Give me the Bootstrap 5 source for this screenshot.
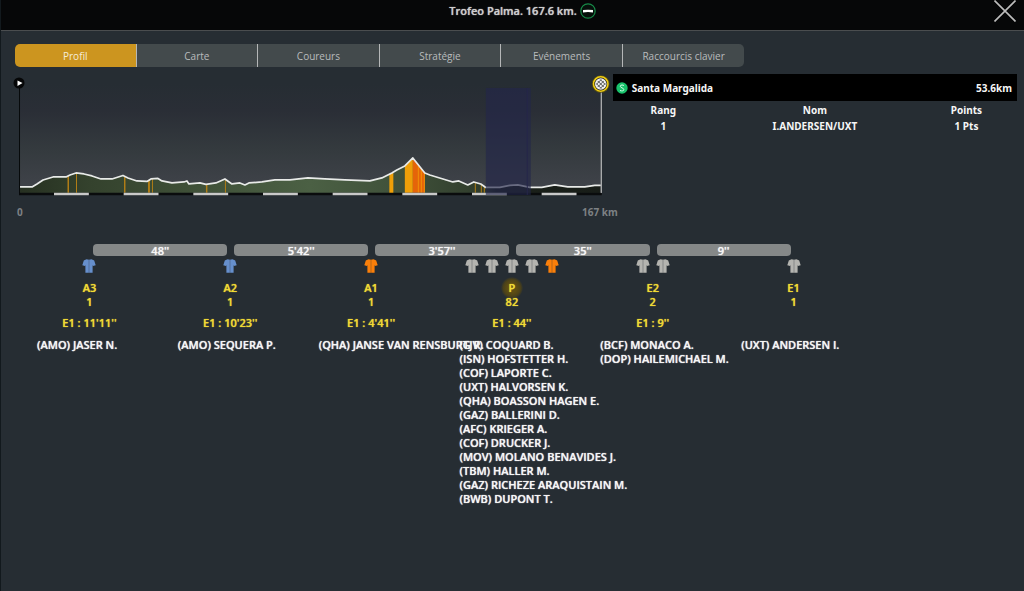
<!DOCTYPE html>
<html lang="fr">
<head>
<meta charset="utf-8">
<meta name="viewport" content="width=device-width, initial-scale=1">
<title>Trofeo Palma</title>
<link href="https://cdn.jsdelivr.net/npm/bootstrap@5.3.0/dist/css/bootstrap.min.css" rel="stylesheet">
<style>
  body { background: #262d33; color: #f6f6f6; font: 700 10px/14px "Noto Sans", "Open Sans", sans-serif; min-height: 100vh; border-left: 1px solid #12191d; }
  .titlebar { height: 31px; background: #060708; border-bottom: 1px solid #4a4d4f; color: #cdcdcd; padding-bottom: 8px; font: 600 11px/14px "Open Sans", sans-serif; }
  .titlebar, .timeline { text-shadow: 0 0 1px currentColor; }
  .title-icon { margin: 0 -20px 0 3px; }
  .close-x { right: 8px; top: 0; line-height: 0; }
  .tabs-row { width: 71.3%; margin: 13px 0 0 14px; }
  .tabs-row .btn { height: 23px; padding: 0; font: 400 10px/24px "Open Sans", sans-serif; color: #b9bcbd; background: #434a4c; border: 0; border-right: 1px solid #b5b7b8; border-radius: 0; }
  .tabs-row .btn:first-child { border-radius: 5px 0 0 5px; }
  .tabs-row .btn:last-child { border-radius: 0 5px 5px 0; border-right: 0; }
  .tabs-row .btn.active { background: #cc951f; color: #f5ecd8; }
  .profile { width: 59.9%; padding: 3px 0 0 11px; }
  .axis { padding: 5px 0 0 5px; margin-right: -4px; color: #7d8184; }
  .sprint { margin: 7px 7px 0 -1px; min-width: 0; }
  .sprint-head { height: 27px; background: #000; padding: 0 5px 0 3px; }
  .points { margin-top: 1px; }
  .points th, .points td { padding: 0; line-height: 16px; text-align: center; font-weight: 700; }
  .timeline { width: 82.6%; margin: 25px 0 0 18px; font: 600 11px/14px "Open Sans", sans-serif; }
  .gaps { display: grid; grid-template-columns: repeat(5, 1fr); margin: 0 8.333%; }
  .gap-bar { height: 12px; line-height: 13px; margin: 0 3px 0 4px; border-radius: 4px; background: #858888; text-align: center; }
  .groups { display: grid; grid-template-columns: repeat(6, minmax(0, 1fr)); }
  .jerseys { gap: 6px; padding-top: 3px; height: 18px; }
  .yl { color: #f0da35; text-align: center; }
  .glow { display: inline-block; width: 22px; height: 22px; line-height: 22px; margin: -4px 0; border-radius: 50%; background: radial-gradient(#5d4d14 30%, #4b4119 55%, #262d33 72%); }
  .gname { margin-top: 7px; }
  .delta { height: 14px; margin: 7px 0 8px; }
  .riders { margin: 0; padding-left: 18px; list-style: none; white-space: nowrap; }
</style>
</head>
<body>
<svg class="d-none" aria-hidden="true"><defs>
  <symbol id="jersey" viewBox="0 0 14 14"><path fill="currentColor" d="M4.500.3Q7 1 9.500.3L12.200 1.600 13.700 6.300 11 7 10.600 6V13.700H3.400V6L3 7 .3 6.300 1.800 1.600Z"/><path d="M7 1V13.700" stroke="#262d33" stroke-opacity=".4" stroke-width=".8"/></symbol>
</defs></svg>
<header class="titlebar position-relative d-flex justify-content-center align-items-center">
  <span>Trofeo Palma. 167.6 km.</span>
  <svg class="title-icon" width="16" height="16" viewBox="0 0 16 16"><circle cx="8" cy="8" r="7.200" fill="#06100b" stroke="#178a48" stroke-width="1.200"/><path d="M3 7Q8 6.500 13 7V9.500Q8 8.500 3 9.500Z" fill="#fff"/></svg>
  <button type="button" class="close-x position-absolute bg-transparent border-0 p-0" aria-label="Fermer"><svg width="22" height="22" viewBox="0 0 22 22"><path d="M.5.5 21.500 21.500M21.500.5.5 21.500" stroke="#bdbdbd" stroke-width="1.600"/></svg></button>
</header>
<nav class="tabs-row d-flex">
  <button type="button" class="btn active col-2">Profil</button>
  <button type="button" class="btn col-2">Carte</button>
  <button type="button" class="btn col-2">Coureurs</button>
  <button type="button" class="btn col-2">Stratégie</button>
  <button type="button" class="btn col-2">Evénements</button>
  <button type="button" class="btn col-2">Raccourcis clavier</button>
</nav>
<main>
  <div class="d-flex align-items-start">
    <section class="profile flex-shrink-0">
      <svg class="d-block w-100" viewBox="12 70 602 130" role="img" aria-label="Profil de l'étape">
        <defs>
          <linearGradient id="sky" x2="0" y2="1"><stop stop-color="#262d33"/><stop offset=".25" stop-color="#2a2e36"/><stop offset=".6" stop-color="#343a3e"/><stop offset="1" stop-color="#41444b"/></linearGradient>
          <linearGradient id="land" x2="1" y2="0"><stop stop-color="#263021"/><stop offset=".12" stop-color="#34422d"/><stop offset=".5" stop-color="#4b6044"/><stop offset=".68" stop-color="#3d4e38"/><stop offset=".8" stop-color="#2f3b2b"/><stop offset=".82" stop-color="#1b211a"/><stop offset="1" stop-color="#181d18"/></linearGradient>
          <path id="ridge" d="M20 187H32L37 184 43 180 53 177 66 177 70 175 76 173 84 174 92 176 101 179 112 179 123 175.500 128 178 137 181 147 181.500 151 179 158 178.500 162 181 172 183 184 182 187 181 189 184 200 183 206 184.500 216 183 225 179 232 184 240 183 245 185 249 183 262 182 275 180 290 180 308 178 325 179 345 180 370 181 382 178 392 173 397 170 405 166 413 158 425 173 430 175 453 182 459 181 468 185 474 182 481 184 486 187.500 500 187.500 510 185.500 518 185 530 187.500 542 187.500 555 185 568 187 585 187 595 185.500 601 185.500"/>
          <clipPath id="under"><path d="M20 187H32L37 184 43 180 53 177 66 177 70 175 76 173 84 174 92 176 101 179 112 179 123 175.500 128 178 137 181 147 181.500 151 179 158 178.500 162 181 172 183 184 182 187 181 189 184 200 183 206 184.500 216 183 225 179 232 184 240 183 245 185 249 183 262 182 275 180 290 180 308 178 325 179 345 180 370 181 382 178 392 173 397 170 405 166 413 158 425 173 430 175 453 182 459 181 468 185 474 182 481 184 486 187.500 500 187.500 510 185.500 518 185 530 187.500 542 187.500 555 185 568 187 585 187 595 185.500 601 185.500V193H20Z"/></clipPath>
        </defs>
        <rect x="20" y="84" width="581" height="109" fill="url(#sky)"/>
        <g clip-path="url(#under)">
          <rect x="20" y="150" width="581" height="43" fill="url(#land)"/>
          <path fill="#b07d16" d="M67.500 150h1.500v43h-1.500zM76 150h1v43h-1zM124 150h1.500v43h-1.500zM148 150h2v43h-2zM152 150h1v43h-1zM206 150h1.500v43h-1.500zM225 150h1v43h-1zM475 150h1v43h-1zM481 150h1v43h-1zM484 150h1v43h-1z"/>
          <path fill="#ee9f08" d="M389.500 150h4v43h-4zM405 150h8v43h-8z"/>
          <path fill="#e56409" d="M413 150h12v43h-12z"/>
          <path stroke="#ef9209" d="M418.500 150v43M421.500 150v43M424.500 150v43"/>
        </g>
        <use href="#ridge" fill="none" stroke="#e8eae8" stroke-width="1.700" stroke-linejoin="round"/>
        <path d="M19 194H602" stroke="#0a0c0d" stroke-width="2.500"/>
        <path d="M54 194H602" stroke="#c9c9c9" stroke-width="2.500" stroke-dasharray="34.850"/>
        <rect x="486" y="88" width="45" height="107" fill="#24264a" fill-opacity=".65"/>
        <path d="M527.500 88V195" stroke="#25264a"/>
        <path d="M19.500 84V195" stroke="#080a0b"/>
        <path d="M601.500 84V193" stroke="#d8d8d8"/>
        <circle cx="19" cy="83" r="5.500" fill="#050607"/><path d="M17.500 80.500 22.500 83 17.500 86Z" fill="#fff"/>
        <circle cx="601" cy="84" r="8.800" fill="#5c5312"/><circle cx="601" cy="84" r="7.200" fill="#20201c" stroke="#f2cf14" stroke-width="1.500"/>
        <circle cx="601" cy="84" r="5.800" fill="#efefef"/>
        <path d="M598 81 604 87M596.500 83.500 601.500 88.500M600.500 79.500 605.500 84.500M604 81 598 87M605.500 83.500 600.500 88.500M601.500 79.500 596.500 84.500" stroke="#444" stroke-width=".9"/>
      </svg>
      <div class="axis d-flex justify-content-between"><span>0</span><span>167 km</span></div>
    </section>
    <section class="sprint flex-fill">
      <div class="sprint-head d-flex align-items-center">
        <svg class="me-1" width="12" height="12" viewBox="0 0 12 12"><circle cx="6" cy="6" r="5.700" fill="#19c26b"/><path d="M8 3.600Q7.200 3 6 3 4.300 3 4.300 4.300C4.300 6 7.800 5.700 7.800 7.600 7.800 9 6 9.200 4 8.500" fill="none" stroke="#d8ffe9"/></svg>
        <span>Santa Margalida</span><span class="ms-auto">53.6km</span>
      </div>
      <table class="points w-100">
        <colgroup><col style="width:25%"><col style="width:50%"><col style="width:25%"></colgroup>
        <thead><tr><th scope="col">Rang</th><th scope="col">Nom</th><th scope="col">Points</th></tr></thead>
        <tbody><tr><td>1</td><td>I.ANDERSEN/UXT</td><td>1 Pts</td></tr></tbody>
      </table>
    </section>
  </div>
  <section class="timeline">
    <div class="gaps"><div class="gap-bar">48''</div><div class="gap-bar">5'42''</div><div class="gap-bar">3'57''</div><div class="gap-bar">35''</div><div class="gap-bar">9''</div></div>
    <div class="groups" id="groups"></div>
  </section>
</main>
<script>
  const blue = '#668fcc', grey = '#b4b4b0', orange = '#fa7f0a';
  const groups = [
    ['A3', 1, "E1 : 11'11''", [blue], ['(AMO) JASER N.']],
    ['A2', 1, "E1 : 10'23''", [blue], ['(AMO) SEQUERA P.']],
    ['A1', 1, "E1 : 4'41''", [orange], ['(QHA) JANSE VAN RENSBURG R.']],
    ['P', 82, "E1 : 44''", [grey, grey, grey, grey, orange], ['(TJV) COQUARD B.', '(ISN) HOFSTETTER H.', '(COF) LAPORTE C.', '(UXT) HALVORSEN K.', '(QHA) BOASSON HAGEN E.', '(GAZ) BALLERINI D.', '(AFC) KRIEGER A.', '(COF) DRUCKER J.', '(MOV) MOLANO BENAVIDES J.', '(TBM) HALLER M.', '(GAZ) RICHEZE ARAQUISTAIN M.', '(BWB) DUPONT T.']],
    ['E2', 2, "E1 : 9''", [grey, grey], ['(BCF) MONACO A.', '(DOP) HAILEMICHAEL M.']],
    ['E1', 1, '', [grey], ['(UXT) ANDERSEN I.']]
  ];
  document.getElementById('groups').innerHTML = groups.map(([name, count, delta, shirts, riders]) => `
    <div>
      <div class="jerseys d-flex justify-content-center">${shirts.map(c => `<svg width="14" height="14" style="color:${c}"><use href="#jersey"/></svg>`).join('')}</div>
      <div class="yl gname"><span class="${name === 'P' ? 'glow' : ''}">${name}</span></div>
      <div class="yl">${count}</div>
      <div class="yl delta">${delta}</div>
      <ul class="riders">${riders.map(r => `<li>${r}</li>`).join('')}</ul>
    </div>`).join('');
</script>
<script src="https://cdn.jsdelivr.net/npm/bootstrap@5.3.0/dist/js/bootstrap.bundle.min.js"></script>
</body>
</html>
